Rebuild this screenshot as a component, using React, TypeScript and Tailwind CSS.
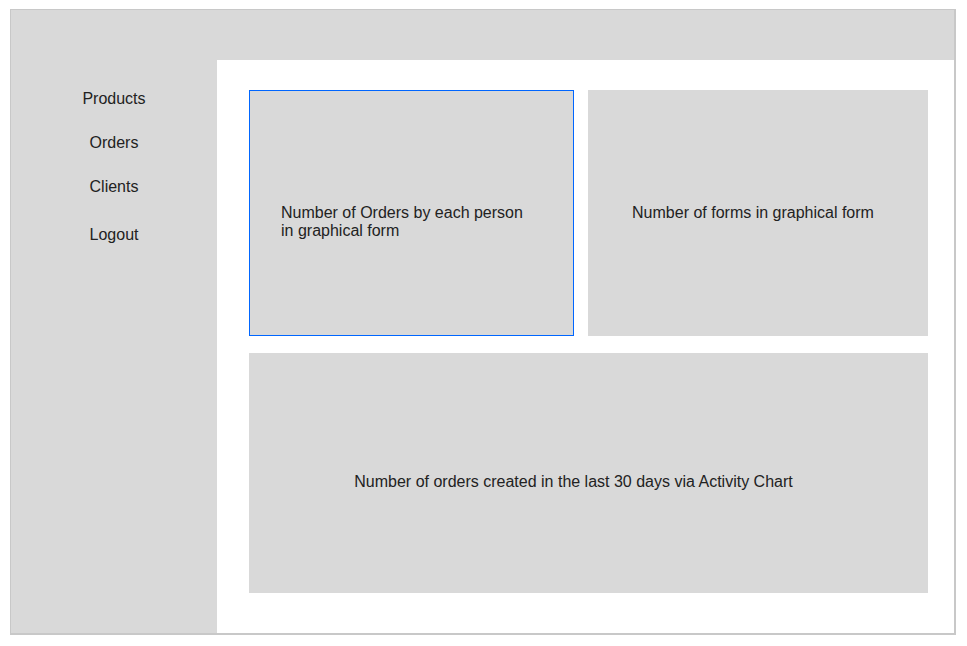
const nav = ["Products", "Orders", "Clients"];

export default function App() {
  return (
    <div className="h-[646px] w-[967px] bg-white pl-[10px] pt-[9px] font-['Liberation_Sans',Arial,sans-serif] text-[16px] text-[#222]">
      <div className="flex h-[626px] w-[946px] flex-col border border-r-2 border-b-2 border-[#c8c8c8] bg-[#d9d9d9]">
        <div className="h-[50px] shrink-0" />
        <div className="flex flex-1">
          <nav className="flex w-[206px] shrink-0 flex-col items-center pt-[30px]">
            {nav.map((n) => (
              <span key={n} className="mb-[26px] leading-[18px]">
                {n}
              </span>
            ))}
            <span className="mt-[4px] leading-[18px]">Logout</span>
          </nav>
          <main className="flex flex-1 flex-col gap-[17px] bg-white pb-[40px] pl-[32px] pr-[26px] pt-[30px]">
            <div className="flex h-[246px] gap-[14px]">
              <section className="flex w-[325px] items-start border border-[#0066ff] bg-[#d9d9d9] pl-[31px] pr-[40px] pt-[113px] leading-[18px]">
                Number of Orders by each person in graphical form
              </section>
              <section className="flex flex-1 items-start justify-center bg-[#d9d9d9] pr-[10px] pt-[114px] leading-[18px]">
                Number of forms in graphical form
              </section>
            </div>
            <section className="flex flex-1 items-center justify-center bg-[#d9d9d9] pr-[30px] pt-[18px] leading-[18px]">
              Number of orders created in the last 30 days via Activity Chart
            </section>
          </main>
        </div>
      </div>
    </div>
  );
}
